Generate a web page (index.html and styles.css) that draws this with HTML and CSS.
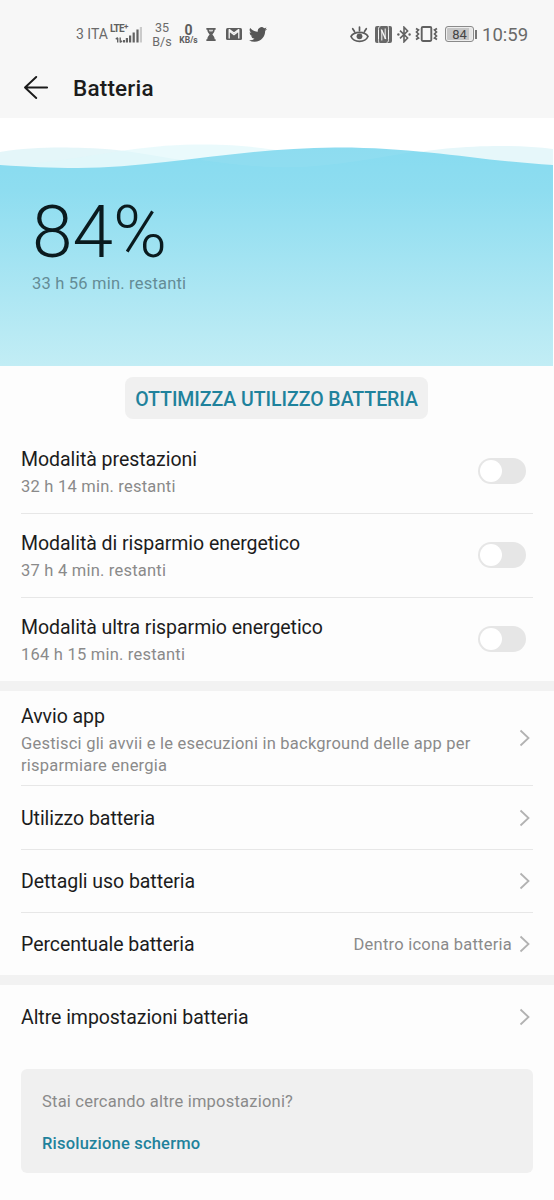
FILE: index.html
```
<!DOCTYPE html>
<html lang="it">
<head>
<meta charset="utf-8">
<title>Batteria</title>
<link rel="stylesheet" href="styles.css">
</head>
<body>
<header class="header">
  <div class="status">
    <div class="status-left">
      <span class="carrier">3 ITA</span>
      <span class="signal">
        <span class="lte">LTE<sup>+</sup></span>
        <svg class="bars" width="33" height="16" viewBox="0 0 33 16"><path d="M6.700 15.500v-4.500M4.800 12.300 6.700 10.500M9.200 10.500v5M9.200 15.500l1.900-1.800" fill="none" stroke="#626262" stroke-width="1.400"/><path d="M12 13h2v2.500h-2zM14.800 11H17v4.500h-2.200zM18 8.500h2.200v7H18zM21.600 5.500h2.200v10h-2.200zM25.400 2.500h2.200v13h-2.200z" fill="#626262"/><path d="M28.800 0H31v15.500h-2.200z" fill="#cacaca"/></svg>
      </span>
      <span class="speed"><span>35</span><span>B/s</span></span>
      <span class="rate"><b class="zero">0</b><b class="unit">KB/s</b></span>
      <svg class="ic-hour" width="10" height="13" viewBox="0 0 10 14"><path d="M0 0h10v2H9c0 2.500-1.500 3.500-2.500 5C7.500 8.500 9 9.500 9 12h1v2H0v-2h1c0-2.500 1.500-3.500 2.500-5C2.500 5.500 1 4.500 1 2H0z" fill="#5e5e5e"/><path d="M2.700 2h4.600c0 .8-.3 1.300-.8 1.700h-3c-.5-.4-.8-.9-.8-1.700z" fill="#d0d0d0"/></svg>
      <svg class="ic-mail" width="16" height="12" viewBox="0 0 16 12"><rect width="16" height="12" rx="1.500" fill="#5e5e5e"/><path d="M3.200 10.500V3L8 6.700 12.800 3v7.500M2.700 1.700h.8L8 5l4.500-3.300h.8" fill="none" stroke="#f7f7f7" stroke-width="1.300"/></svg>
      <svg class="ic-bird" width="18" height="15" viewBox="0 0 24 20"><path d="M23.950 2.600a10 10 0 0 1-2.820.77 4.960 4.960 0 0 0 2.160-2.720c-.95.550-2 .95-3.130 1.180a4.920 4.920 0 0 0-8.380 4.480C7.690 6.130 4.070 4.160 1.640 1.200a4.920 4.920 0 0 0 1.520 6.560 4.900 4.900 0 0 1-2.230-.6v.05a4.920 4.920 0 0 0 3.950 4.830 5 5 0 0 1-2.210.08 4.940 4.940 0 0 0 4.600 3.420A9.870 9.870 0 0 1 0 17.540a14 14 0 0 0 7.550 2.210c9.050 0 14-7.500 14-13.980 0-.21 0-.42-.02-.63A9.940 9.940 0 0 0 24 2.600z" fill="#565656"/></svg>
    </div>
    <div class="status-right">
      <svg class="ic-eye" width="19" height="17" viewBox="0 0 19 17" fill="none" stroke="#5c5c5c" stroke-width="1.700" stroke-linecap="round"><path d="M1 10.500C4 5 15 5 18 10.500 15 17 4 17 1 10.500zM9.500 4.500V1M4.500 5.500 2.700 2.700M14.500 5.500l1.800-2.800"/><circle cx="9.500" cy="10.300" r="2.900" fill="#5c5c5c" stroke="none"/></svg>
      <svg class="ic-nfc" width="17" height="17" viewBox="0 0 17 17"><rect width="17" height="17" rx="2" fill="#686868"/><path d="M5.500 0C3.500 1.500 3.500 1.500 3.500 3.500v10c0 2 0 2 .5 3.500M6.800 14.500V4M10.200 13V2.500M11.500 17c2-1.500 2-1.500 2-3.500v-10c0-2 0-2-.5-3.500" stroke="#f7f7f7" stroke-width="1" fill="none"/><path d="M6.300 3.500l4.400 9.500" stroke="#f7f7f7" stroke-width="1.400"/></svg>
      <svg class="ic-bt" width="14" height="17" viewBox="0 0 14 17"><path d="M3 4.700 10.600 12 7 15.800V1.200L10.600 5 3 12.300" fill="none" stroke="#626262" stroke-width="1.600"/><circle cx="1.400" cy="8.500" r="1.200" fill="#626262"/><circle cx="12.600" cy="8.500" r="1.200" fill="#626262"/></svg>
      <svg class="ic-vib" width="23" height="16" viewBox="0 0 23 16" fill="none" stroke="#606060"><rect x="6.700" y="1" width="9.600" height="14" rx="1.200" stroke-width="1.900"/><path d="M1 2.500 3.500 4 1.500 6 3.500 8l-2 2 2 2L1 13.500M22 2.500 19.500 4l2 2-2 2 2 2-2 2 2.500 1.500" stroke-width="1.700"/></svg>
      <span class="battery"><span class="cell">84</span><i class="tip"></i></span>
      <span class="clock">10:59</span>
    </div>
  </div>
  <div class="appbar">
    <svg class="back" width="24" height="24" viewBox="0 0 24 24" fill="none" stroke="#1a1a1a" stroke-width="1.900" stroke-linecap="round" stroke-linejoin="round"><path d="M23.200 11.500H1M12.200 1 1 11.500l11.200 10.500"/></svg>
    <h1 class="title">Batteria</h1>
  </div>
</header>

<section class="hero">
  <svg class="waves" width="553" height="248" viewBox="0 0 553 248">
    <defs><linearGradient id="water" gradientUnits="userSpaceOnUse" x1="0" y1="28" x2="0" y2="248"><stop offset="0" stop-color="#87dbf0"/><stop offset=".2" stop-color="#8eddf0"/><stop offset="1" stop-color="#c2edf5"/></linearGradient></defs>
    <path d="M0 34C30 29 60 29 85 30C130 31 160 40 190 43L100 60H0z" fill="#dff5f8" opacity=".85"/>
    <path d="M30 46C100 38 140 27 195 26.500C240 26 260 30 290 34L200 60H0z" fill="#dff7fa" opacity=".65"/>
    <path d="M400 38C440 28 510 25 553 31V60H400z" fill="#e6f7fa"/>
    <path d="M0 47C30 49 50 50 78 50C160 50 240 30 335 29.500C420 29 480 43 553 47V248H0z" fill="url(#water)"/>
    <path d="M200 42C250 28 340 22 430 32C380 38 330 51 277 49C250 49 225 45 200 42z" fill="#fff" opacity=".05"/>
  </svg>
  <div class="hero-text">
    <div class="percent">84%</div>
    <div class="remaining">33 h 56 min. restanti</div>
  </div>
</section>

<div class="optimize"><button class="button">OTTIMIZZA UTILIZZO BATTERIA</button></div>

<section class="group">
  <div class="row mode"><div><div class="label">Modalità prestazioni</div><div class="sub">32 h 14 min. restanti</div></div><span class="switch"></span></div>
  <div class="row mode"><div><div class="label">Modalità di risparmio energetico</div><div class="sub">37 h 4 min. restanti</div></div><span class="switch"></span></div>
  <div class="row mode"><div><div class="label">Modalità ultra risparmio energetico</div><div class="sub">164 h 15 min. restanti</div></div><span class="switch"></span></div>
</section>

<section class="group">
  <div class="row launch"><div><div class="label">Avvio app</div><div class="sub">Gestisci gli avvii e le esecuzioni in background delle app per<br>risparmiare energia</div></div><svg class="chevron" width="11" height="18" viewBox="0 0 11 18"><path d="M1.500 1.500 9.500 9l-8 7.500"/></svg></div>
  <div class="row link tall"><div class="label">Utilizzo batteria</div><svg class="chevron" width="11" height="18" viewBox="0 0 11 18"><path d="M1.500 1.500 9.500 9l-8 7.500"/></svg></div>
  <div class="row link"><div class="label">Dettagli uso batteria</div><svg class="chevron" width="11" height="18" viewBox="0 0 11 18"><path d="M1.500 1.500 9.500 9l-8 7.500"/></svg></div>
  <div class="row link"><div class="label">Percentuale batteria</div><div class="value">Dentro icona batteria</div><svg class="chevron" width="11" height="18" viewBox="0 0 11 18"><path d="M1.500 1.500 9.500 9l-8 7.500"/></svg></div>
</section>

<section class="group">
  <div class="row link"><div class="label">Altre impostazioni batteria</div><svg class="chevron" width="11" height="18" viewBox="0 0 11 18"><path d="M1.500 1.500 9.500 9l-8 7.500"/></svg></div>
</section>

<aside class="card">
  <div class="question">Stai cercando altre impostazioni?</div>
  <a class="more">Risoluzione schermo</a>
</aside>
</body>
</html>
```
FILE: styles.css
```
* { box-sizing: border-box; }
body { margin: 0; width: 554px; height: 1200px; overflow: hidden; background: #fdfdfd; color: #1c1c1c; font-family: Roboto, "Liberation Sans", sans-serif; }
svg { display: block; flex: none; }
.header { height: 118px; background: #f7f7f7; }
.status { height: 58px; padding: 10px 27px 0 76px; display: flex; justify-content: space-between; color: #6a6a6a; }
.status-left, .status-right { display: flex; align-items: center; height: 48px; white-space: nowrap; }
.carrier { font-size: 14px; width: 34px; }
.signal { display: flex; flex-direction: column; width: 33px; height: 20px; position: relative; }
.lte { font: bold 10px/10px Roboto, sans-serif; letter-spacing: -.7px; color: #606060; }
.lte sup { font-size: 8px; line-height: 0; vertical-align: 3px; }
.bars { position: absolute; left: 1px; top: 3px; }
.speed { display: flex; flex-direction: column; align-items: center; width: 20px; margin-left: 9px; padding-top: 1px; font-size: 12.5px; line-height: 14px; }
.rate { display: flex; flex-direction: column; align-items: center; width: 19px; margin-left: 7px; padding-top: 1px; color: #5c5c5c; }
.zero { font-size: 14px; line-height: 12px; }
.unit { font-size: 8.5px; line-height: 9px; }
.ic-hour { margin-left: 8px; }
.ic-mail { margin-left: 10px; }
.ic-bird { margin-left: 7px; }
.ic-nfc { margin-left: 6px; }
.ic-bt { margin-left: 5px; }
.ic-vib { margin-left: 4px; }
.battery { display: flex; align-items: center; margin-left: 7px; }
.cell { width: 29px; height: 16px; border: 1px solid #8a8a8a; border-radius: 3px; background: linear-gradient(90deg, #c6c6c6 84%, #e6e6e6 84%); box-shadow: inset 0 0 0 1px #eee; font-size: 13px; line-height: 15px; text-align: center; color: #444; }
.tip { width: 2px; height: 9px; background: #777; margin-left: 1px; }
.clock { margin-left: 5px; font-size: 18.5px; line-height: 22px; width: 45px; padding-top: 1px; }
.appbar { height: 60px; display: flex; align-items: center; padding-left: 24px; }
.title { margin: 0 0 0 25px; font-size: 22.5px; line-height: 26px; font-weight: 500; letter-spacing: .2px; padding-bottom: 1px; }
.hero { height: 248px; display: grid; background: #fff; }
.waves, .hero-text { grid-area: 1 / 1; }
.hero-text { padding: 75px 0 0 32px; }
.percent { font-size: 73px; line-height: 78px; font-weight: 300; color: #0a1a1e; }
.remaining { font-size: 16.500px; line-height: 20px; color: #648c96; letter-spacing: .2px; margin-top: 3px; }
.optimize { padding: 11px 0 0 125px; height: 63px; }
.button { display: block; width: 303px; height: 42px; padding: 3px 0 0; border: 0; border-radius: 8px; background: #f0f0f0; color: #1f829c; font: 500 19.500px/39px Roboto, sans-serif; letter-spacing: -.05px; white-space: nowrap; }
.group + .group { border-top: 10px solid #f2f2f2; }
.row { margin: 0 21px; display: flex; align-items: center; justify-content: space-between; }
.row + .row { border-top: 1px solid #e7e7e7; }
.label { font-size: 19.500px; line-height: 26px; letter-spacing: -.05px; padding-top: 2px; }
.sub { font-size: 16.500px; line-height: 22px; margin-top: 3px; color: #8a8a8a; letter-spacing: .22px; }
.mode { height: 84px; padding-right: 7px; }
.switch { width: 48px; height: 26px; border-radius: 13px; background: #e6e6e6; padding: 2px; flex: none; }
.switch::before { content: ""; display: block; width: 22px; height: 22px; border-radius: 50%; background: #fff; }
.mode + .mode .switch { margin-bottom: 1px; }
.launch { height: 94px; padding-right: 3px; }
.launch .label { padding-top: 5px; }
.link { height: 63px; padding-right: 3px; }
.tall { height: 64px; }
.chevron path { fill: none; stroke: #b2b2b2; stroke-width: 1.800; }
.value { margin-left: auto; margin-right: 7px; padding-top: 1px; font-size: 16.500px; letter-spacing: .23px; color: #8a8a8a; }
.card { margin: 21px 21px 0; height: 104px; border-radius: 6px; background: #f0f0f0; padding: 22px 21px; }
.question { font-size: 16.500px; line-height: 22px; color: #8a8a8a; letter-spacing: .22px; }
.more { display: block; margin-top: 20px; font-size: 16.500px; line-height: 22px; font-weight: 500; color: #1f829c; letter-spacing: .2px; }
```
